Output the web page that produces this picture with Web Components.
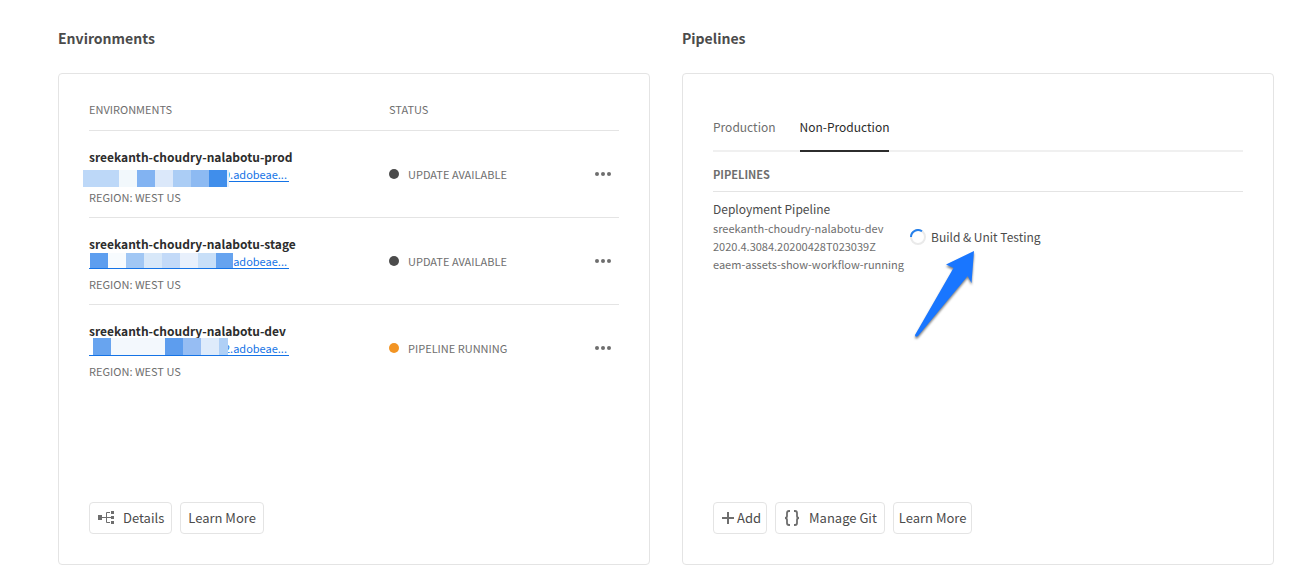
<!DOCTYPE html>
<html lang="en">
<head>
<meta charset="utf-8">
<title>Program overview</title>
<style>
  body { margin: 0; background: #fff; color: #4b4b4b; font-family: "Noto Sans CJK SC", "Noto Sans", sans-serif; font-size: 13px; }
</style>
</head>
<body>
<program-overview>
  <overview-card heading="Environments">
    <environment-table></environment-table>
    <action-button slot="actions" wide>
      <svg slot="icon" width="18" height="16" viewBox="0 0 18 16" fill="#6e6e6e"><path d="M1 5h4v5H1zM14 1h3v3h-3zM14 6h3v3h-3zM14 11h3v3h-3z"/><path d="M5 7.5h9M13 2.500H9.500v10h3.500" fill="none" stroke="#6e6e6e"/></svg>
      Details
    </action-button>
    <action-button slot="actions">Learn More</action-button>
  </overview-card>
  <overview-card heading="Pipelines">
    <pipeline-panel></pipeline-panel>
    <action-button slot="actions" tight>
      <svg slot="icon" width="16" height="14" viewBox="-2 0 16 14"><path d="M7 1v12M1 7h12" stroke="#6e6e6e" stroke-width="2"/></svg>
      Add
    </action-button>
    <action-button slot="actions" wide>
      <svg slot="icon" width="18" height="16" viewBox="0 0 18 16" fill="none" stroke="#6e6e6e" stroke-width="1.800"><path d="M7 1H6Q4 1 4 3V6Q4 8 2 8Q4 8 4 10V13Q4 15 6 15H7M11 1H12Q14 1 14 3V6Q14 8 16 8Q14 8 14 10V13Q14 15 12 15H11"/></svg>
      Manage Git
    </action-button>
    <action-button slot="actions" tight>Learn More</action-button>
  </overview-card>
</program-overview>

<script>
function define(name, markup, setup) {
  const template = document.createElement('template');
  template.innerHTML = markup;
  customElements.define(name, class extends HTMLElement {
    constructor() {
      super();
      this.attachShadow({ mode: 'open' }).append(template.content.cloneNode(true));
    }
    connectedCallback() { if (setup) setup(this, this.shadowRoot); }
  });
}

define('program-overview', `
  <style>
    :host { display: block; }
    main { box-sizing: border-box; min-height: 100vh; padding: 27px 17px 20px 58px;
      display: grid; grid-template-columns: repeat(auto-fit, minmax(440px, 1fr)); gap: 32px; }
  </style>
  <main><slot></slot></main>`);

define('overview-card', `
  <style>
    :host { display: flex; flex-direction: column; min-width: 0; }
    h2 { margin: 0 0 24px; font-size: 14px; line-height: 22px; font-weight: 700; color: #4b4b4b; }
    section { flex: 1; display: flex; flex-direction: column; box-sizing: border-box; padding: 26px 30px 30px;
      border: 1px solid #e4e4e4; border-radius: 4px; }
    .content { flex: 1; }
    footer { display: flex; flex-wrap: wrap; gap: 8px; }
  </style>
  <h2></h2>
  <section>
    <div class="content"><slot></slot></div>
    <footer><slot name="actions"></slot></footer>
  </section>`,
  (host, root) => { root.querySelector('h2').textContent = host.getAttribute('heading'); });

define('action-button', `
  <style>
    :host { display: block; }
    button { display: flex; align-items: center; height: 32px; padding: 0 7px; border: 1px solid #e4e4e4;
      border-radius: 4px; background: #fff; color: #4b4b4b; font: inherit; line-height: 20px; white-space: nowrap; }
    :host([tight]) button { padding: 0 5px; }
    slot[name=icon] { display: flex; margin-right: 2px; }
    :host([wide]) slot[name=icon] { margin-right: 8px; }
    ::slotted(svg) { display: block; }
  </style>
  <button type="button"><slot name="icon"></slot><span><slot></slot></span></button>`,
  (host, root) => {
    if (!host.querySelector('[slot=icon]')) root.querySelector('slot[name=icon]').remove();
  });

define('masked-link', `
  <style>
    :host { display: block; position: relative; width: 200px; }
    a { box-sizing: border-box; display: block; height: 15px; margin-bottom: 7px; padding-right: 2px; border-bottom: 1px solid #1473e6; color: #1473e6;
      font-size: 11px; line-height: 14px; text-align: right; text-decoration: none; }
    svg { position: absolute; left: -6px; top: -4px; }
  </style>
  <a href="#"></a>
  <svg width="152" height="24" aria-hidden="true"></svg>`,
  (host, root) => {
    root.querySelector('a').textContent = host.getAttribute('text');
    const y = host.getAttribute('top'), h = host.getAttribute('size');
    root.querySelector('svg').innerHTML = host.getAttribute('blocks').split(' ').map(b => {
      const [x, w, fill] = b.split(',');
      return `<rect x="${x}" y="${y}" width="${w}" height="${h}" fill="${fill}"/>`;
    }).join('');
  });

define('status-light', `
  <style>
    :host { display: flex; align-items: center; gap: 9px; font-size: 11px; line-height: 16px; color: #6e6e6e; }
    i { width: 10px; height: 10px; border-radius: 50%; background: var(--light, #4b4b4b); }
  </style>
  <i></i><span><slot></slot></span>`);

define('more-button', `
  <style>
    :host { display: block; }
    button { display: block; margin-left: auto; padding: 6px 8px; border: 0; background: none; }
    svg { display: block; }
  </style>
  <button type="button" aria-label="More actions"><svg width="16" height="4" viewBox="0 0 16 4" fill="#6e6e6e"><circle cx="2" cy="2" r="2"/><circle cx="8" cy="2" r="2"/><circle cx="14" cy="2" r="2"/></svg></button>`);

const environments = [
  { name: 'prod', link: '9.adobeae...', status: 'UPDATE AVAILABLE', top: 7, size: 17,
    blocks: '0,36,#bdd8f8 36,18,#f2f8fc 54,18,#82b3f2 72,18,#dbe8fa 90,18,#abcdf5 108,18,#8dbaf2 126,18,#408eeb 144,2,#e3effc' },
  { name: 'stage', link: '.adobeae...', status: 'UPDATE AVAILABLE', top: 3, size: 15,
    blocks: '7,18,#5d9eef 25,18,#f7fbfe 43,18,#a1c7f4 61,18,#d8e8f9 79,18,#c3daf8 97,18,#e8f0fc 115,18,#c8dff8 133,17,#66a3ef' },
  { name: 'dev', link: '2.adobeae...', status: 'PIPELINE RUNNING', light: '#f29423', top: 1, size: 17,
    blocks: '10,18,#68a4ef 28,54,#f3f8fd 82,18,#5d9dee 100,18,#96bdf3 118,18,#deebfb 136,9,#afd0f6' }
];

define('environment-table', `
  <style>
    :host { display: block; }
    table { width: 100%; border-collapse: separate; border-spacing: 0; table-layout: fixed; }
    th, td { box-sizing: border-box; padding: 0; text-align: left; vertical-align: middle; border-bottom: 1px solid #e4e4e4; }
    th { height: 31px; padding-bottom: 12px; font-size: 11px; line-height: 16px; font-weight: 400; color: #6e6e6e; }
    th:first-child { width: 300px; }
    th:last-child { width: 32px; }
    td { height: 87px; }
    tbody tr:last-child td { border-bottom-color: transparent; }
    strong { display: block; font-size: 12px; line-height: 20px; color: #2c2c2c; }
    small { display: block; font-size: 11px; line-height: 16px; color: #6e6e6e; }
    .name { padding-top: 4px; }
  </style>
  <table>
    <thead><tr><th>ENVIRONMENTS</th><th>STATUS</th><th aria-label="Actions"></th></tr></thead>
    <tbody></tbody>
  </table>`,
  (host, root) => {
    root.querySelector('tbody').innerHTML = environments.map(e => `
      <tr>
        <td class="name">
          <strong>sreekanth-choudry-nalabotu-${e.name}</strong>
          <masked-link text="${e.link}" top="${e.top}" size="${e.size}" blocks="${e.blocks}"></masked-link>
          <small>REGION: WEST US</small>
        </td>
        <td><status-light${e.light ? ` style="--light: ${e.light}"` : ''}>${e.status}</status-light></td>
        <td><more-button></more-button></td>
      </tr>`).join('');
  });

define('build-status', `
  <style>
    :host { display: flex; align-items: center; gap: 5px; position: relative; line-height: 20px; color: #4b4b4b; }
    svg { display: block; flex: none; }
    .arrow { position: absolute; left: 0; top: 20px; filter: drop-shadow(0 2px 1px rgba(0, 0, 0, .5)); overflow: visible; }
  </style>
  <svg width="16" height="16" viewBox="0 0 16 16" fill="none" stroke-width="2"><circle cx="8" cy="8" r="7" stroke="#eaeaea"/><path d="M1 8A7 7 0 0 1 12 2.300" stroke="#2680eb"/></svg>
  <span><slot></slot></span>
  <svg class="arrow" width="70" height="96" viewBox="0 0 70 96" aria-hidden="true"><path d="M64 4L36 17.500L43.500 21L5 88Q5 91 8 89L57.700 29L61.500 36Z" fill="#1976ff"/></svg>`);

define('pipeline-panel', `
  <style>
    :host { display: block; font-size: 12px; }
    nav { display: flex; gap: 24px; padding-top: 15px; border-bottom: 2px solid #f0f0f0; }
    nav a { margin-bottom: -2px; padding-bottom: 11px; line-height: 24px; border-bottom: 2px solid transparent; color: #6e6e6e; text-decoration: none; }
    nav a[aria-current] { color: #2c2c2c; border-color: #2c2c2c; }
    table { width: 100%; border-spacing: 0; table-layout: fixed; }
    th, td { padding: 0; text-align: left; vertical-align: top; }
    th { padding: 14px 0 9px; border-bottom: 1px solid #e4e4e4; font-size: 11px; line-height: 16px; font-weight: 700; color: #6e6e6e; }
    th:first-child { width: 197px; }
    td { padding-top: 7px; font-size: 11px; line-height: 18px; color: #6e6e6e; white-space: nowrap; }
    b { display: block; font-size: 12px; line-height: 20px; font-weight: 400; color: #4b4b4b; }
    td + td { padding-top: 35px; font-size: 12px; }
  </style>
  <nav><a href="#production">Production</a><a href="#non-production" aria-current="page">Non-Production</a></nav>
  <table>
    <thead><tr><th>PIPELINES</th><th aria-label="Status"></th></tr></thead>
    <tbody><tr>
      <td><b>Deployment Pipeline</b>sreekanth-choudry-nalabotu-dev<br>2020.4.3084.20200428T023039Z<br>eaem-assets-show-workflow-running</td>
      <td><build-status>Build &amp; Unit Testing</build-status></td>
    </tr></tbody>
  </table>`);
</script>
</body>
</html>
